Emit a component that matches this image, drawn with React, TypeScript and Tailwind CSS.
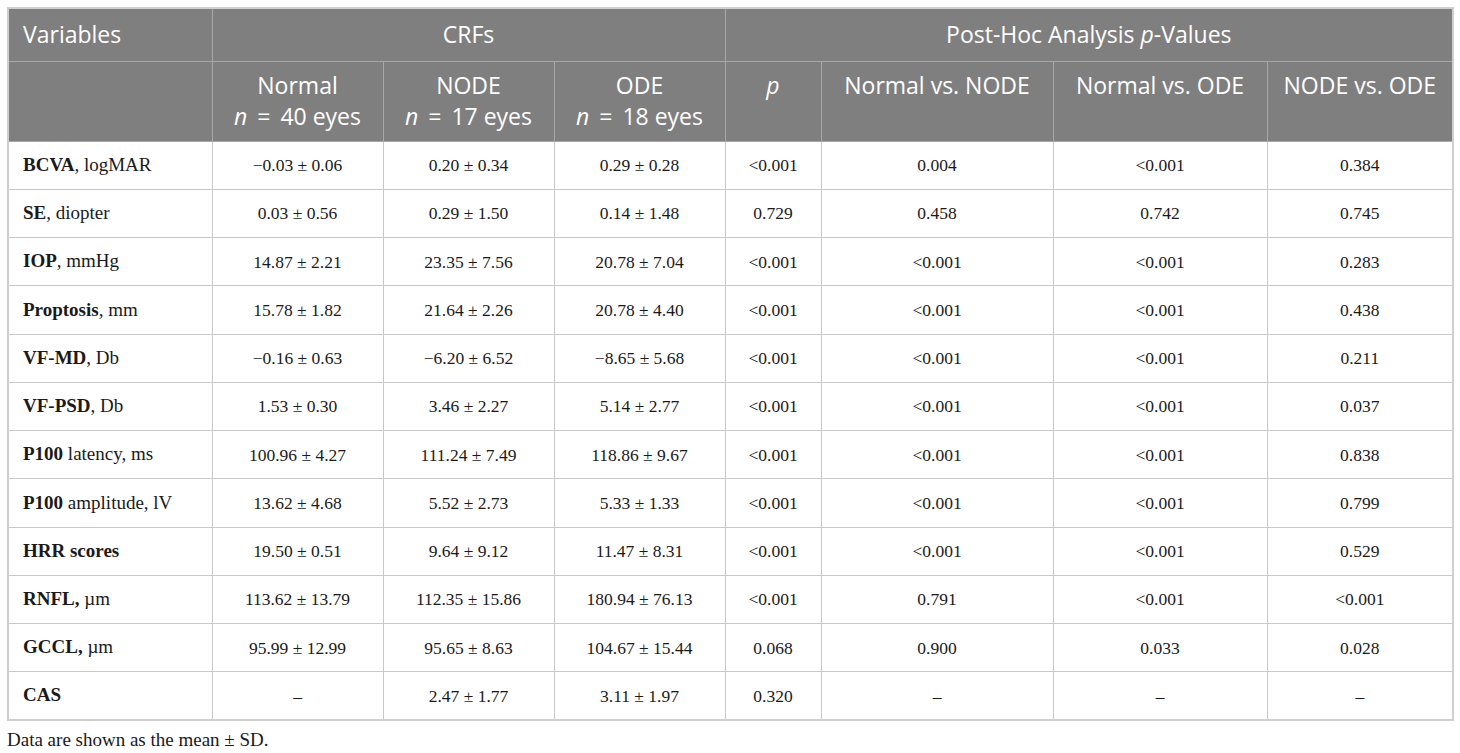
import React from 'react';

type Row = {
  bold: string;
  rest: string;
  normal: string;
  node: string;
  ode: string;
  p: string;
  nVsNode: string;
  nVsOde: string;
  nodeVsOde: string;
};

const ROWS: Row[] = [
  { bold: 'BCVA', rest: ', logMAR', normal: '\u22120.03 \u00b1 0.06', node: '0.20 \u00b1 0.34', ode: '0.29 \u00b1 0.28', p: '<0.001', nVsNode: '0.004', nVsOde: '<0.001', nodeVsOde: '0.384' },
  { bold: 'SE', rest: ', diopter', normal: '0.03 \u00b1 0.56', node: '0.29 \u00b1 1.50', ode: '0.14 \u00b1 1.48', p: '0.729', nVsNode: '0.458', nVsOde: '0.742', nodeVsOde: '0.745' },
  { bold: 'IOP', rest: ', mmHg', normal: '14.87 \u00b1 2.21', node: '23.35 \u00b1 7.56', ode: '20.78 \u00b1 7.04', p: '<0.001', nVsNode: '<0.001', nVsOde: '<0.001', nodeVsOde: '0.283' },
  { bold: 'Proptosis', rest: ', mm', normal: '15.78 \u00b1 1.82', node: '21.64 \u00b1 2.26', ode: '20.78 \u00b1 4.40', p: '<0.001', nVsNode: '<0.001', nVsOde: '<0.001', nodeVsOde: '0.438' },
  { bold: 'VF-MD', rest: ', Db', normal: '\u22120.16 \u00b1 0.63', node: '\u22126.20 \u00b1 6.52', ode: '\u22128.65 \u00b1 5.68', p: '<0.001', nVsNode: '<0.001', nVsOde: '<0.001', nodeVsOde: '0.211' },
  { bold: 'VF-PSD', rest: ', Db', normal: '1.53 \u00b1 0.30', node: '3.46 \u00b1 2.27', ode: '5.14 \u00b1 2.77', p: '<0.001', nVsNode: '<0.001', nVsOde: '<0.001', nodeVsOde: '0.037' },
  { bold: 'P100', rest: ' latency, ms', normal: '100.96 \u00b1 4.27', node: '111.24 \u00b1 7.49', ode: '118.86 \u00b1 9.67', p: '<0.001', nVsNode: '<0.001', nVsOde: '<0.001', nodeVsOde: '0.838' },
  { bold: 'P100', rest: ' amplitude, lV', normal: '13.62 \u00b1 4.68', node: '5.52 \u00b1 2.73', ode: '5.33 \u00b1 1.33', p: '<0.001', nVsNode: '<0.001', nVsOde: '<0.001', nodeVsOde: '0.799' },
  { bold: 'HRR scores', rest: '', normal: '19.50 \u00b1 0.51', node: '9.64 \u00b1 9.12', ode: '11.47 \u00b1 8.31', p: '<0.001', nVsNode: '<0.001', nVsOde: '<0.001', nodeVsOde: '0.529' },
  { bold: 'RNFL,', rest: ' \u00b5m', normal: '113.62 \u00b1 13.79', node: '112.35 \u00b1 15.86', ode: '180.94 \u00b1 76.13', p: '<0.001', nVsNode: '0.791', nVsOde: '<0.001', nodeVsOde: '<0.001' },
  { bold: 'GCCL,', rest: ' \u00b5m', normal: '95.99 \u00b1 12.99', node: '95.65 \u00b1 8.63', ode: '104.67 \u00b1 15.44', p: '0.068', nVsNode: '0.900', nVsOde: '0.033', nodeVsOde: '0.028' },
  { bold: 'CAS', rest: '', normal: '\u2013', node: '2.47 \u00b1 1.77', ode: '3.11 \u00b1 1.97', p: '0.320', nVsNode: '\u2013', nVsOde: '\u2013', nodeVsOde: '\u2013' },
];

const GROUPS = [
  { name: 'Normal', n: 40 },
  { name: 'NODE', n: 17 },
  { name: 'ODE', n: 18 },
];

const th = 'border border-[#a8a8a8] font-normal text-white';
const td = 'border border-[#c9c9c9] text-center';

export default function App() {
  return (
    <div className="min-h-screen bg-white pl-[7px] pt-[7px]">
      <table
        className="w-[1445px] table-fixed border-collapse border-2 border-[#cfcfcf]"
        style={{ fontFamily: '"Liberation Serif", serif' }}
      >
        <colgroup>
          <col className="w-[204px]" />
          <col className="w-[171px]" />
          <col className="w-[171px]" />
          <col className="w-[171px]" />
          <col className="w-[96px]" />
          <col className="w-[232px]" />
          <col className="w-[214px]" />
          <col className="w-[186px]" />
        </colgroup>
        <thead
          className="bg-[#7f7f7f] text-[23px] leading-[31px]"
          style={{ fontFamily: '"Open Sans", sans-serif' }}
        >
          <tr className="h-[53px]">
            <th className={`${th} px-[14px] text-left`}>Variables</th>
            <th className={`${th} text-center`} colSpan={3}>CRFs</th>
            <th className={`${th} text-center`} colSpan={4}>
              Post-Hoc Analysis <i>p</i>-Values
            </th>
          </tr>
          <tr className="h-[80px]">
            <th className={th}></th>
            {GROUPS.map((g) => (
              <th key={g.name} className={`${th} pt-[8px] align-top`}>
                <div>{g.name}</div>
                <div>
                  <i>n</i>
                  <span className="mx-[4px]"> = </span>
                  {g.n} eyes
                </div>
              </th>
            ))}
            <th className={`${th} pt-[8px] align-top`}>
              <i>p</i>
            </th>
            <th className={`${th} pt-[8px] align-top`}>Normal vs. NODE</th>
            <th className={`${th} pt-[8px] align-top`}>Normal vs. ODE</th>
            <th className={`${th} pt-[8px] align-top`}>NODE vs. ODE</th>
          </tr>
        </thead>
        <tbody className="text-[17.5px] text-[#1a1a1a]">
          {ROWS.map((r, i) => (
            <tr key={i} className="h-[48.25px]">
              <td className="border border-[#c9c9c9] px-[14px] text-left text-[19px]">
                <b>{r.bold}</b>
                {r.rest}
              </td>
              <td className={td}>{r.normal}</td>
              <td className={td}>{r.node}</td>
              <td className={td}>{r.ode}</td>
              <td className={td}>{r.p}</td>
              <td className={td}>{r.nVsNode}</td>
              <td className={td}>{r.nVsOde}</td>
              <td className={td}>{r.nodeVsOde}</td>
            </tr>
          ))}
        </tbody>
      </table>
      <p
        className="mt-[7px] text-[19px] leading-[24px] text-[#1a1a1a]"
        style={{ fontFamily: '"Liberation Serif", serif' }}
      >
        Data are shown as the mean ± SD.
      </p>
    </div>
  );
}
